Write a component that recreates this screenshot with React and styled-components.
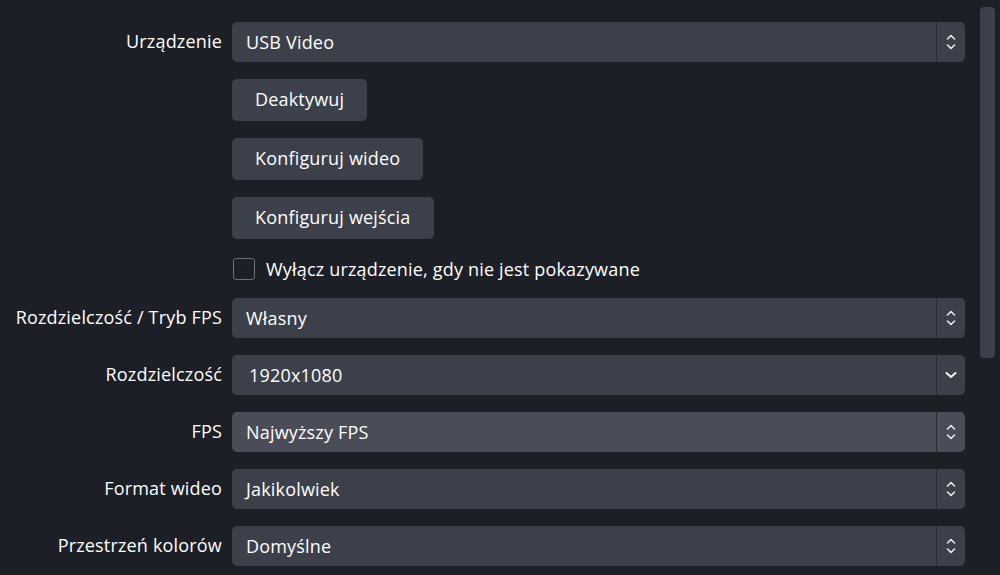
import React from 'react'
import styled, { createGlobalStyle } from 'styled-components'

const GlobalStyle = createGlobalStyle`
  html, body {
    margin: 0;
    padding: 0;
    background: #1d1f26;
  }
  body {
    font-family: "Open Sans", "Noto Sans", sans-serif;
    color: #fefefe;
    letter-spacing: 0.18px;
  }
`

const Page = styled.div`
  width: 1000px;
  height: 575px;
  overflow: hidden;
  display: flex;
  background: #1d1f26;
`

const Form = styled.div`
  flex: 1;
  display: grid;
  grid-template-columns: 222px 733px;
  column-gap: 10px;
  row-gap: 17px;
  align-content: start;
  padding-top: 22px;
`

const Label = styled.div`
  font-size: 18px;
  text-align: right;
  align-self: center;
  white-space: nowrap;
  margin-top: -2px;
`

const Combo = styled.div`
  height: 40px;
  display: flex;
  border-radius: 5px;
  overflow: hidden;
  background: ${p => (p.$hover ? '#4a4d58' : '#3c404b')};
`

const ComboText = styled.div`
  flex: 1;
  display: flex;
  align-items: center;
  padding-left: ${p => (p.$editable ? '17px' : '14px')};
  font-size: 18px;
  margin-top: -1px;
`

const ArrowBox = styled.div`
  width: 28px;
  border-left: 1px solid #2a2c34;
  display: flex;
  align-items: center;
  justify-content: center;
`

const Button = styled.div`
  justify-self: start;
  height: 42px;
  padding: 0 23px 2px;
  display: flex;
  align-items: center;
  background: #3c404b;
  border-radius: 5px;
  font-size: 18px;
  box-sizing: border-box;
`

const CheckRow = styled.div`
  height: 25px;
  display: flex;
  align-items: center;
  gap: 11px;
  font-size: 18px;
  padding-left: 1px;
`

const Box = styled.div`
  width: 20px;
  height: 20px;
  border: 1px solid #6b6e78;
  border-radius: 3px;
`

const Scrollbar = styled.div`
  width: 45px;
  padding: 7px 5px 0 0;
  box-sizing: border-box;
  display: flex;
  justify-content: flex-end;
`

const Thumb = styled.div`
  width: 15px;
  height: 351px;
  background: #3c404b;
  border-radius: 4px;
`

const UpDown = () => (
  <svg width="12" height="20" viewBox="0 0 12 20" fill="none" stroke="#e8e8ea" strokeWidth="1.6" strokeLinecap="round" strokeLinejoin="round">
    <path d="M2.5 7 L6 3.5 L9.5 7" />
    <path d="M2.5 13 L6 16.5 L9.5 13" />
  </svg>
)

const Down = () => (
  <svg width="14" height="10" viewBox="0 0 14 10" fill="none" stroke="#f2f2f4" strokeWidth="2" strokeLinecap="round" strokeLinejoin="round">
    <path d="M2.5 3 L7 7 L11.5 3" />
  </svg>
)

const Select = ({ value, hover, single, editable }) => (
  <Combo $hover={hover}>
    <ComboText $editable={editable}>{value}</ComboText>
    <ArrowBox>{single ? <Down /> : <UpDown />}</ArrowBox>
  </Combo>
)

export default function App() {
  return (
    <Page>
      <GlobalStyle />
      <Form>
        <Label>Urządzenie</Label>
        <Select value="USB Video" />

        <div />
        <Button>Deaktywuj</Button>

        <div />
        <Button>Konfiguruj wideo</Button>

        <div />
        <Button>Konfiguruj wejścia</Button>

        <div />
        <CheckRow>
          <Box />
          <span>Wyłącz urządzenie, gdy nie jest pokazywane</span>
        </CheckRow>

        <Label>Rozdzielczość / Tryb FPS</Label>
        <Select value="Własny" />

        <Label>Rozdzielczość</Label>
        <Select value="1920x1080" single editable />

        <Label>FPS</Label>
        <Select value="Najwyższy FPS" hover />

        <Label>Format wideo</Label>
        <Select value="Jakikolwiek" />

        <Label>Przestrzeń kolorów</Label>
        <Select value="Domyślne" />
      </Form>
      <Scrollbar>
        <Thumb />
      </Scrollbar>
    </Page>
  )
}
